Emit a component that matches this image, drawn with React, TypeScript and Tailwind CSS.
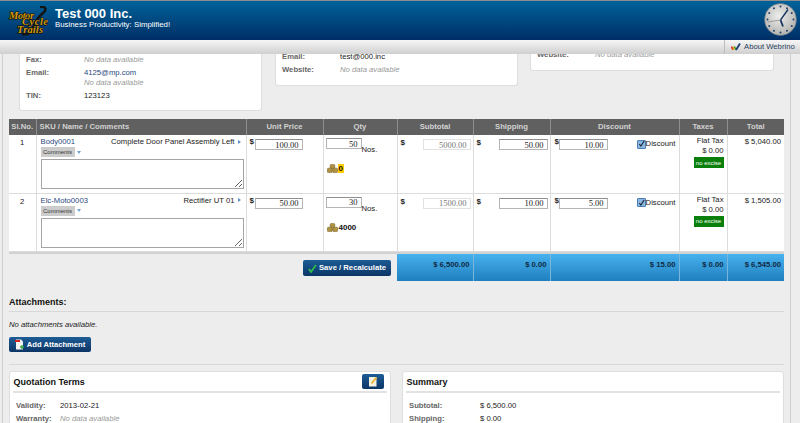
const grid = "border-r border-[#dcdcdc]";

function Logo() {
  return (
    <svg width="42" height="30" viewBox="0 0 42 30" className="shrink-0">
      <path d="M32 1 C38 0 39 4 35 7 C30 11 27 16 25 22 C23 27 19 29 14 28" fill="none" stroke="#141414" strokeWidth="2.5" />
      <g fontFamily="'Liberation Serif', serif" fontStyle="italic" fontWeight="700" fontSize="10.5" fill="#d09a10" stroke="#120c02" strokeWidth="1.1" paintOrder="stroke">
        <text x="1" y="13" textLength="25">Motor</text>
        <text x="14" y="19" textLength="26">Cycle</text>
        <text x="9" y="27" textLength="26">Trails</text>
      </g>
    </svg>
  );
}

function Clock() {
  return (
    <svg width="33" height="33" viewBox="0 0 33 33">
      <defs>
        <radialGradient id="clockFace" cx="0.45" cy="0.4" r="0.7">
          <stop offset="0" stopColor="#eeeeee" />
          <stop offset="1" stopColor="#a8a8a4" />
        </radialGradient>
      </defs>
      <circle cx="16.5" cy="16.5" r="16" fill="url(#clockFace)" stroke="#5c6d7d" strokeWidth="0.6" />
      {[0, 30, 60, 90, 120, 150, 180, 210, 240, 270, 300, 330].map((a) => (
        <circle key={a} cx="16.5" cy="3.5" r="1" fill="#1f3f6c" transform={`rotate(${a} 16.5 16.5)`} />
      ))}
      <path d="M16.5 17 L24 6.5" stroke="#16335f" strokeWidth="1.3" />
      <path d="M16.5 17 L19 23.5" stroke="#16335f" strokeWidth="1.8" />
      <path d="M16.5 17 L3.5 19" stroke="#8d8d8d" strokeWidth="0.8" />
    </svg>
  );
}

function WebrinoMark() {
  return (
    <svg width="10" height="8" viewBox="0 0 10 8" className="shrink-0">
      <path d="M0.5 3.5 L1.8 7" stroke="#d12a1f" strokeWidth="1.5" fill="none" />
      <path d="M2 7 L3.3 3.5" stroke="#e8a317" strokeWidth="1.5" fill="none" />
      <path d="M3.5 3.5 L4.8 7" stroke="#4f9a24" strokeWidth="1.5" fill="none" />
      <path d="M5 7 L9 0.5" stroke="#1f3f74" strokeWidth="1.8" fill="none" />
    </svg>
  );
}

function Coins() {
  return (
    <svg width="11" height="9" viewBox="0 0 11 9" className="shrink-0">
      <g fill="#b0923f" stroke="#6a5522" strokeWidth="0.5">
        <rect x="3.2" y="0.4" width="4.6" height="4" rx="1.2" />
        <rect x="0.3" y="4.2" width="5" height="4.4" rx="1.2" />
        <rect x="5.7" y="4.2" width="5" height="4.4" rx="1.2" />
      </g>
    </svg>
  );
}

function FieldRow({ label, value, muted, link, w = "w-[65px]" }: { label: string; value: string; muted?: boolean; link?: boolean; w?: string }) {
  return (
    <div className="flex h-[13px] items-center leading-[13px]">
      <span className={`${w} shrink-0 font-bold text-[#666]`}>{label}</span>
      <span className={muted ? "italic text-[#999]" : link ? "text-[#2a4a80]" : "text-[#222]"}>{value}</span>
    </div>
  );
}

function PriceInput({ value, w, disabled }: { value: string; w: string; disabled?: boolean }) {
  return (
    <input
      readOnly
      value={value}
      className={`${w} h-[11px] shrink-0 border bg-white pr-[3px] text-right font-['Liberation_Serif',serif] text-[8.5px] leading-none outline-none ${
        disabled ? "border-[#e2e2e2] text-[#777]" : "border-[#b5b5b5] border-t-[#8f8f8f] text-[#222]"
      }`}
    />
  );
}

type Line = { no: string; sku: string; name: string; price: string; qty: string; stock: string; low?: boolean; sub: string; ship: string; disc: string; total: string };

const lines: Line[] = [
  { no: "1", sku: "Body0001", name: "Complete Door Panel Assembly Left", price: "100.00", qty: "50", stock: "0", low: true, sub: "5000.00", ship: "50.00", disc: "10.00", total: "$ 5,040.00" },
  { no: "2", sku: "Elc-Moto0003", name: "Rectifier UT 01", price: "50.00", qty: "30", stock: "4000", sub: "1500.00", ship: "10.00", disc: "5.00", total: "$ 1,505.00" },
];

function ItemRow({ line }: { line: Line }) {
  return (
    <tr className="h-[58px] border-b border-[#dcdcdc] bg-white align-top">
      <td className={`${grid} pt-[2px] text-center leading-[11px] text-[#222]`}>{line.no}</td>
      <td className={`${grid} px-[4px] pt-[1px]`}>
        <div className="flex h-[11px] items-center justify-between leading-[11px]">
          <span className="text-[#2a4a80]">{line.sku}</span>
          <span className="flex items-center gap-[3px] pr-[1px] text-[#222]">
            {line.name}
            <span className="h-0 w-0 border-y-[2.5px] border-l-[3px] border-y-transparent border-l-[#5b93c7]" />
          </span>
        </div>
        <div className="flex items-center gap-[2px]">
          <span className="flex h-[10px] w-[34px] items-center justify-center bg-[#cccccc] text-[6px] leading-none text-[#333]">Comments</span>
          <span className="h-0 w-0 border-x-[2.5px] border-t-[3px] border-x-transparent border-t-[#6fa3d2]" />
        </div>
        <textarea readOnly className="mt-[2px] block h-[30px] w-[203px] border border-[#a5a5a5] bg-white outline-none" />
      </td>
      <td className={`${grid} pl-[2px] pt-[4px]`}>
        <div className="flex items-start gap-0 pl-[1px]">
          <span className="w-[5px] text-[8px] font-bold leading-[6px] text-[#222]">$</span>
          <PriceInput value={line.price} w="w-[48px]" />
        </div>
      </td>
      <td className={`${grid} pl-[2px] pt-[3px]`}>
        <div className="flex items-start">
          <PriceInput value={line.qty} w="w-[36px]" />
          <span className="pt-[7px] leading-[9px] text-[#222]">Nos.</span>
        </div>
        <div className="mt-[10px] flex items-center pl-[1px]">
          <Coins />
          <span className={`px-[1px] text-[8px] font-bold leading-[9px] text-[#111] ${line.low ? "bg-[#ffcc00]" : ""}`}>{line.stock}</span>
        </div>
      </td>
      <td className={`${grid} pl-[3px] pt-[4px]`}>
        <div className="flex items-start justify-between pr-[2px]">
          <span className="text-[8px] font-bold leading-[7px] text-[#222]">$</span>
          <PriceInput value={line.sub} w="w-[48px]" disabled />
        </div>
      </td>
      <td className={`${grid} pl-[3px] pt-[4px]`}>
        <div className="flex items-start justify-between pr-[2px]">
          <span className="text-[8px] font-bold leading-[7px] text-[#222]">$</span>
          <PriceInput value={line.ship} w="w-[49px]" />
        </div>
      </td>
      <td className={`${grid} pl-[4px] pt-[4px]`}>
        <div className="flex items-start">
          <span className="w-[4px] text-[8px] font-bold leading-[6px] text-[#222]">$</span>
          <PriceInput value={line.disc} w="w-[49px]" />
          <span className="ml-auto flex items-center pr-[3px] leading-[10px] text-[#222]">
            <span className="flex h-[9px] w-[9px] items-center justify-center rounded-[1px] border border-[#4a7fb5] bg-[#8db6de]">
              <svg width="8" height="8" viewBox="0 0 8 8"><path d="M1.5 4 L3.3 6.4 L7 0.5" fill="none" stroke="#16263c" strokeWidth="1.3" /></svg>
            </span>
            Discount
          </span>
        </div>
      </td>
      <td className={`${grid} pr-[3px] pt-[1px]`}>
        <div className="flex flex-col items-end text-[#222]">
          <span className="leading-[10px]">Flat Tax</span>
          <span className="leading-[10px]">$ 0.00</span>
          <span className="mt-[1px] flex h-[11px] w-[30px] items-center justify-center bg-[#0b7f0b] text-[6px] leading-none text-white">no excise</span>
        </div>
      </td>
      <td className="pr-[3px] pt-[2px] text-right leading-[10px] text-[#222]">{line.total}</td>
    </tr>
  );
}

const headers = ["Sl.No.", "SKU / Name / Comments", "Unit Price", "Qty", "Subtotal", "Shipping", "Discount", "Taxes", "Total"];
const totals = ["$ 6,500.00", "$ 0.00", "$ 15.00", "$ 0.00", "$ 6,545.00"];

export default function App() {
  return (
    <div className="h-[423px] w-[800px] overflow-hidden bg-[#ededed] font-['Liberation_Sans',Arial,sans-serif] text-[7.7px]">
      <header className="flex h-[40px] border-t border-[#8c8c8c] bg-linear-to-b from-[#00639a] to-[#002e66] pl-[8px] pr-[3px]">
        <div className="flex pt-[5px]">
          <Logo />
          <div className="ml-[5px] text-white">
            <div className="text-[13px] font-bold leading-[15px]">Test 000 Inc.</div>
            <div className="text-[7.85px] leading-[8px]">Business Productivity: Simplified!</div>
          </div>
        </div>
        <div className="ml-auto pt-[2px]">
          <Clock />
        </div>
      </header>

      <div className="flex h-[14px] justify-end bg-linear-to-b from-[#f6f6f6] to-[#cfcfcf]">
        <div className="flex w-[76px] items-center gap-[3px] whitespace-nowrap border-l border-[#bcbcbc] pl-[6px] text-[#2a3f5f]">
          <WebrinoMark />
          <span>About Webrino</span>
        </div>
      </div>

      <main className="ml-[2px] h-[369px] w-[789px] overflow-hidden border-x border-[#cfcfcf] pl-[6px]">
        <section className="flex h-[65px] items-start pl-[10px]">
          <div className="flex h-[57px] w-[243px] flex-col justify-end rounded-b-[3px] border border-t-0 border-[#dedede] bg-white pb-[8px] pl-[6px]">
            <FieldRow label="Fax:" value="No data available" muted w="w-[58px]" />
            <FieldRow label="Email:" value="4125@mp.com" link w="w-[58px]" />
            <div className="h-[9px] pl-[58px] italic leading-[8px] text-[#999]">No data available</div>
            <div className="mt-[2px]" />
            <FieldRow label="TIN:" value="123123" w="w-[58px]" />
          </div>
          <div className="ml-[13px] flex h-[32px] w-[243px] flex-col justify-end rounded-b-[3px] border border-t-0 border-[#dedede] bg-white pb-[9px] pl-[6px]">
            <FieldRow label="Email:" value="test@000.inc" w="w-[58px]" />
            <FieldRow label="Website:" value="No data available" muted w="w-[58px]" />
          </div>
          <div className="ml-[12px] flex h-[17px] w-[244px] flex-col justify-end overflow-hidden rounded-b-[3px] border border-t-0 border-[#dedede] bg-white pb-[9px] pl-[6px]">
            <FieldRow label="Website:" value="No data available" muted w="w-[58px]" />
          </div>
        </section>

        <table className="w-[775px] table-fixed border-collapse">
          <colgroup>
            <col className="w-[27px]" />
            <col className="w-[210px]" />
            <col className="w-[77px]" />
            <col className="w-[74px]" />
            <col className="w-[76px]" />
            <col className="w-[77px]" />
            <col className="w-[129px]" />
            <col className="w-[48px]" />
            <col className="w-[57px]" />
          </colgroup>
          <thead>
            <tr className="h-[16px] bg-[#606060] text-[#d2d2d2]">
              {headers.map((h, i) => (
                <th key={h} className={`${i === 1 ? "pl-[3px] text-left" : "text-center"} ${i < 8 ? "border-r border-[#8f8f8f]" : ""} p-0 font-bold leading-none`}>
                  {h}
                </th>
              ))}
            </tr>
          </thead>
          <tbody>
            {lines.map((l) => (
              <ItemRow key={l.no} line={l} />
            ))}
            <tr className="h-[3px] bg-[#d2d2d2]">
              <td colSpan={9} className="p-0" />
            </tr>
            <tr className="h-[27px]">
              <td colSpan={4} className="p-0 text-right align-top">
                <div className="flex justify-end pr-[6px] pt-[6px]">
                  <button className="flex h-[16px] w-[88px] items-center justify-center gap-[2px] rounded-[2px] bg-linear-to-b from-[#1d5c96] to-[#0c3565] text-[7.7px] font-bold leading-none text-white">
                    <svg width="9" height="9" viewBox="0 0 9 9"><path d="M1 5 L3 8 L8 1" fill="none" stroke="#2fc04a" strokeWidth="1.7" /></svg>
                    Save / Recalculate
                  </button>
                </div>
              </td>
              {totals.map((t, i) => (
                <td key={i} className={`bg-linear-to-b from-[#47b2ee] to-[#1f7fbe] pr-[3px] pt-[6px] text-right align-top font-bold leading-[9px] text-[#102a43] ${i < 4 ? "border-r border-[#7ab6dc]" : ""}`}>
                  {t}
                </td>
              ))}
            </tr>
          </tbody>
        </table>

        <section className="mt-[16px] w-[775px]">
          <h2 className="border-b border-[#d8d8d8] pb-[3px] text-[9px] font-bold leading-[11px] text-[#111]">Attachments:</h2>
          <p className="mt-[8px] italic leading-[10px] text-[#222]">No attachments available.</p>
          <button className="mt-[7px] flex h-[15px] w-[82px] items-center justify-center gap-[3px] rounded-[2px] bg-linear-to-b from-[#1d5c96] to-[#0c3565] text-[7.6px] font-bold leading-none text-white">
            <svg width="9" height="11" viewBox="0 0 9 11">
              <path d="M1 0.5 H6 L8 2.5 V10.5 H1 Z" fill="#f3f3f3" />
              <rect x="0" y="1" width="5" height="2" fill="#d1291f" />
              <path d="M5 8 H9 M7 6 V10" stroke="#3aa545" strokeWidth="1.4" />
            </svg>
            Add Attachment
          </button>
          <div className="mt-[12px] border-t border-[#d8d8d8]" />
        </section>

        <section className="mt-[6px] flex w-[775px] items-start gap-[11px]">
          <div className="h-[70px] w-[382px] rounded-[3px] border border-[#dedede] bg-white px-[3px]">
            <div className="flex h-[21px] items-center justify-between border-b-[2px] border-[#e2e2e2] pl-[0.5px] pr-[3px]">
              <h3 className="pt-[3px] text-[9px] font-bold text-[#111]">Quotation Terms</h3>
              <button className="flex h-[15px] w-[22px] items-center justify-center rounded-[2px] bg-linear-to-b from-[#1d5c96] to-[#0c3565]">
                <svg width="10" height="11" viewBox="0 0 10 11">
                  <rect x="1" y="1" width="7.5" height="9.5" fill="#f4f1df" />
                  <path d="M3.5 7.5 L8.5 1.5" stroke="#e8b02c" strokeWidth="1.8" />
                </svg>
              </button>
            </div>
            <div className="pl-[3px] pt-[6px]">
              <FieldRow label="Validity:" value="2013-02-21" w="w-[44px]" />
              <FieldRow label="Warranty:" value="No data available" muted w="w-[44px]" />
            </div>
          </div>
          <div className="h-[70px] w-[382px] rounded-[3px] border border-[#dedede] bg-white px-[3px]">
            <div className="flex h-[21px] items-center border-b-[2px] border-[#e2e2e2] pl-[0.5px]">
              <h3 className="pt-[3px] text-[9px] font-bold text-[#111]">Summary</h3>
            </div>
            <div className="pl-[3px] pt-[6px]">
              <FieldRow label="Subtotal:" value="$ 6,500.00" w="w-[71px]" />
              <FieldRow label="Shipping:" value="$ 0.00" w="w-[71px]" />
            </div>
          </div>
        </section>
      </main>
    </div>
  );
}
